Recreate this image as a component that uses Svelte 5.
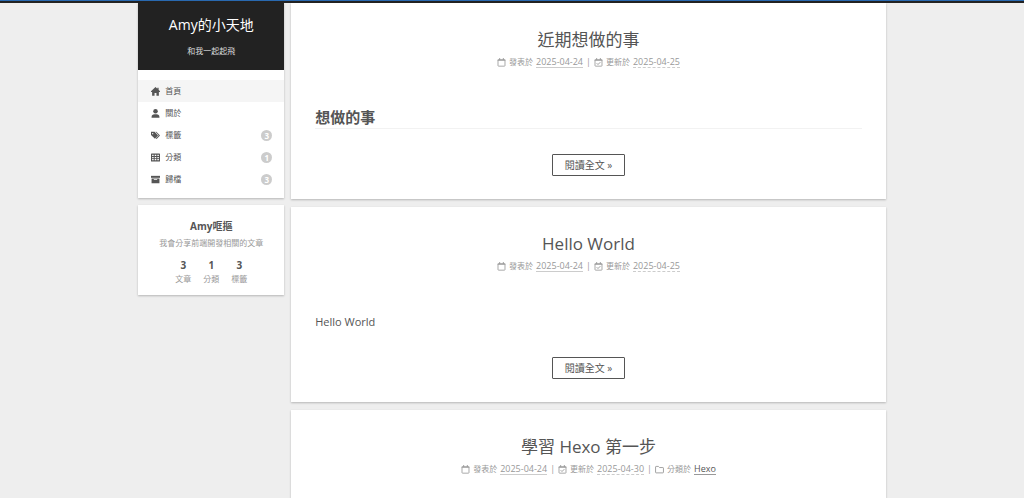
<script lang="ts">
	interface Post {
		title: string;
		posted: string;
		updated: string;
		category?: string;
		heading?: string;
		text?: string;
	}

	const menu = [
		{ label: '首頁', icon: 'home', active: true },
		{ label: '關於', icon: 'user' },
		{ label: '標籤', icon: 'tags', count: 3 },
		{ label: '分類', icon: 'table', count: 1 },
		{ label: '歸檔', icon: 'archive', count: 3 }
	];

	const stats = [
		{ count: 3, label: '文章' },
		{ count: 1, label: '分類' },
		{ count: 3, label: '標籤' }
	];

	const posts: Post[] = [
		{ title: '近期想做的事', posted: '2025-04-24', updated: '2025-04-25', heading: '想做的事' },
		{ title: 'Hello World', posted: '2025-04-24', updated: '2025-04-25', text: 'Hello World' },
		{ title: '學習 Hexo 第一步', posted: '2025-04-24', updated: '2025-04-30', category: 'Hexo' }
	];
</script>

{#snippet icon(name: string)}
	<svg class="icon" viewBox="0 0 16 16" aria-hidden="true">
		{#if name === 'home'}
			<path d="M8 0 0 7.500V9h2v6.500h4.300V10.500h3.400v5H14V9h2V7.500L13.500 5V1.500h-2.200V3z" />
		{:else if name === 'user'}
			<circle cx="8" cy="4" r="4" />
			<path d="M1 15.500V14c0-2.800 2.200-4.500 5-4.500h4c2.800 0 5 1.700 5 4.500v1.500z" />
		{:else if name === 'tags'}
			<path fill-rule="evenodd" d="M0 1.500h6.500l6 6.300-5.500 6L0 7zM3 3.500a1.200 1.200 0 1 0 0 2.400 1.200 1.200 0 0 0 0-2.400z" />
			<path d="M8 1.500h1.500L16 7.800 10 14l-1.500-1 5.200-5.200z" />
		{:else if name === 'table'}
			<path fill-rule="evenodd" d="M1 1h14a1 1 0 0 1 1 1v12a1 1 0 0 1-1 1H1a1 1 0 0 1-1-1V2a1 1 0 0 1 1-1zM2 3v2.300h2.700V3zm4.600 0v2.300h2.800V3zm4.700 0v2.300H14V3zM2 6.900v2.300h2.700V6.900zm4.600 0v2.300h2.800V6.900zm4.700 0v2.300H14V6.900zM2 10.800v2.200h2.700v-2.200zm4.600 0v2.200h2.800v-2.200zm4.700 0v2.200H14v-2.200z" />
		{:else if name === 'archive'}
			<path d="M0 1.500h16V5H0z" />
			<path fill-rule="evenodd" d="M1 6h14v8.500H1zM5 7.500V9h6V7.500z" />
		{:else if name === 'folder'}
			<path fill="none" stroke="currentColor" stroke-width="1.600" d="M1 3.500a1 1 0 0 1 1-1h4l2 2h6a1 1 0 0 1 1 1V13a1 1 0 0 1-1 1H2a1 1 0 0 1-1-1z" />
		{:else}
			<path d="M4 0h1.600v2h4.800V0H12v2h1.500A1.500 1.500 0 0 1 15 3.500V5H1V3.500A1.500 1.500 0 0 1 2.500 2H4z" />
			<path fill="none" stroke="currentColor" stroke-width="1.500" d="M1.800 4v9.500a1 1 0 0 0 1 1h10.400a1 1 0 0 0 1-1V4" />
			{#if name === 'check'}
				<path fill="none" stroke="currentColor" stroke-width="1.700" d="m4.800 9.300 2.300 2.300 4.200-4.200" />
			{/if}
		{/if}
	</svg>
{/snippet}

<div class="headband"></div>

<div class="container">
	<aside class="sidebar">
		<header class="card site">
			<div class="brand">
				<h1><a href="/">Amy的小天地</a></h1>
				<p>和我一起起飛</p>
			</div>
			<nav>
				<ul class="menu">
					{#each menu as item}
						<li>
							<a href="/" class:active={item.active}>
								{@render icon(item.icon)}
								<span>{item.label}</span>
								{#if item.count}
									<span class="badge">{item.count}</span>
								{/if}
							</a>
						</li>
					{/each}
				</ul>
			</nav>
		</header>

		<section class="card author">
			<p class="author-name">Amy哐摳</p>
			<p class="description">我會分享前端開發相關的文章</p>
			<div class="stats">
				{#each stats as stat}
					<a href="/">
						<strong>{stat.count}</strong>
						<span>{stat.label}</span>
					</a>
				{/each}
			</div>
		</section>
	</aside>

	<main>
		{#each posts as post}
			<article class="card post">
				<h2 class="post-title"><a href="/">{post.title}</a></h2>
				<div class="meta">
					<span class="meta-item">
						{@render icon('calendar')}
						<span>發表於</span>
						<time>{post.posted}</time>
					</span>
					<span class="meta-item">
						{@render icon('check')}
						<span>更新於</span>
						<time class="dashed">{post.updated}</time>
					</span>
					{#if post.category}
						<span class="meta-item">
							{@render icon('folder')}
							<span>分類於</span>
							<a href="/">{post.category}</a>
						</span>
					{/if}
				</div>
				{#if post.heading || post.text}
					<div class="body">
						{#if post.heading}
							<h3>{post.heading}</h3>
						{:else}
							<p>{post.text}</p>
						{/if}
					</div>
					<a class="more" href="/">閱讀全文 »</a>
				{/if}
			</article>
		{/each}
	</main>
</div>

<style>
	:global(body) {
		background: #eee;
		color: #555;
		font-family: 'Open Sans', 'Noto Sans CJK TC', sans-serif;
		font-size: 8px;
		line-height: 12px;
	}

	a {
		color: inherit;
		text-decoration: none;
	}

	h1,
	h2,
	h3,
	p,
	ul {
		margin: 0;
		padding: 0;
	}

	.headband {
		height: 1px;
		border-bottom: 2px solid #222;
		background: #2969b0;
	}

	.container {
		display: flex;
		align-items: flex-start;
		gap: 7px;
		width: 73%;
		margin: 0 auto;
	}

	.card {
		background: #fff;
		box-shadow: 0 1px 2px rgba(0, 0, 0, 0.24);
	}

	.icon {
		width: 9px;
		height: 9px;
		flex: none;
		fill: currentColor;
	}

	.sidebar {
		flex: 0 0 146px;
		display: flex;
		flex-direction: column;
		gap: 7px;
	}

	.brand {
		padding: 12px 0 13px;
		background: #222;
		color: #fff;
		text-align: center;
	}

	.brand h1 {
		font-size: 14px;
		font-weight: 400;
		line-height: 20px;
	}

	.brand p {
		margin-top: 10px;
		color: #ddd;
	}

	.menu {
		padding: 10px 0 8px;
		list-style: none;
	}

	.menu a {
		display: flex;
		align-items: center;
		gap: 5px;
		height: 22px;
		padding: 0 12px 0 13px;
	}

	.menu .active {
		background: #f5f5f5;
	}

	.badge {
		margin-left: auto;
		width: 11px;
		border-radius: 6px;
		background: #ccc;
		color: #fff;
		font-weight: 700;
		line-height: 11px;
		text-align: center;
	}

	.author {
		padding: 14px 0 10px;
		text-align: center;
	}

	.author-name {
		font-size: 10px;
		font-weight: 700;
		line-height: 14px;
	}

	.description {
		margin-top: 4px;
		color: #999;
	}

	.stats {
		display: flex;
		justify-content: center;
		gap: 12px;
		margin-top: 8px;
	}

	.stats a {
		display: flex;
		flex-direction: column;
		color: #999;
	}

	.stats strong {
		color: #555;
		font-size: 10px;
		line-height: 16px;
	}

	main {
		flex: 1;
		display: flex;
		flex-direction: column;
		gap: 8px;
		min-width: 0;
	}

	.post {
		padding: 24px 24px 23px;
		text-align: center;
	}

	.post-title {
		font-size: 17px;
		font-weight: 400;
		line-height: 26px;
	}

	.meta {
		display: flex;
		justify-content: center;
		margin-top: 3px;
		color: #999;
	}

	.meta-item {
		display: flex;
		align-items: center;
		gap: 3px;
	}

	.meta-item + .meta-item::before {
		content: '|';
		margin-left: 3px;
		font-size: 9px;
	}

	.meta time,
	.meta a {
		border-bottom: 1px solid #ccc;
		font-size: 9px;
		line-height: 11px;
	}

	.meta .dashed {
		border-bottom-style: dashed;
	}

	.meta a {
		border-color: #999;
		color: #555;
	}

	.body {
		padding: 39px 0 25px;
		text-align: left;
	}

	.body h3 {
		border-bottom: 1px solid #f2f2f2;
		font-size: 15px;
		line-height: 21px;
	}

	.body p {
		font-size: 11px;
		line-height: 21px;
	}

	.more {
		display: inline-block;
		padding: 0 12px;
		border: 1px solid #555;
		border-radius: 1px;
		font-size: 10px;
		line-height: 20px;
	}
</style>
